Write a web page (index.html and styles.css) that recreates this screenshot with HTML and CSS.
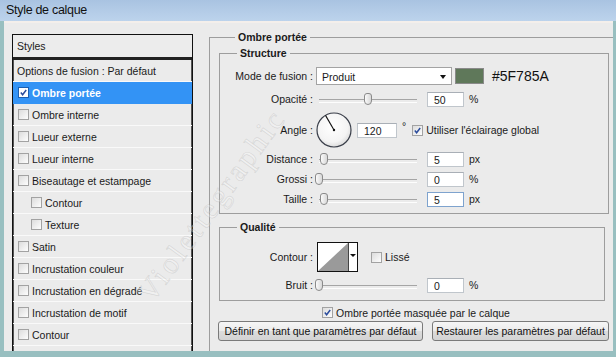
FILE: index.html
```html
<!DOCTYPE html>
<html lang="fr">
<head>
<meta charset="utf-8">
<title>Style de calque</title>
<link rel="stylesheet" href="styles.css">
</head>
<body>
<div class="window">
  <div class="titlebar">Style de calque</div>
  <div class="body">
    <div class="styles-panel">
      <div class="panel-head">Styles</div>
      <div class="panel-row opt">Options de fusion : Par défaut</div>
      <div class="panel-row sel"><span class="cb on white"><svg viewBox="0 0 11 11"><path d="M2.2 5.6 L4.4 8.2 L8.8 2.4"/></svg></span>Ombre portée</div>
      <div class="panel-row"><span class="cb"></span>Ombre interne</div>
      <div class="panel-row"><span class="cb"></span>Lueur externe</div>
      <div class="panel-row"><span class="cb"></span>Lueur interne</div>
      <div class="panel-row"><span class="cb"></span>Biseautage et estampage</div>
      <div class="panel-row sub"><span class="cb"></span>Contour</div>
      <div class="panel-row sub"><span class="cb"></span>Texture</div>
      <div class="panel-row"><span class="cb"></span>Satin</div>
      <div class="panel-row"><span class="cb"></span>Incrustation couleur</div>
      <div class="panel-row"><span class="cb"></span>Incrustation en dégradé</div>
      <div class="panel-row"><span class="cb"></span>Incrustation de motif</div>
      <div class="panel-row"><span class="cb"></span>Contour</div>
    </div>

    <div class="settings">
      <fieldset class="group outer">
        <legend>Ombre portée</legend>

        <fieldset class="group structure">
          <legend>Structure</legend>
          <div class="row row-mode">
            <span class="label">Mode de fusion :</span>
            <div class="select"><span>Produit</span><span class="arrow"></span></div>
            <span class="swatch"></span>
            <span class="hex">#5F785A</span>
          </div>
          <div class="row row-slider">
            <span class="label">Opacité :</span>
            <div class="slider"><span class="thumb" style="left: 50%"></span></div>
            <span class="field">50</span>
            <span class="unit">%</span>
          </div>
          <div class="row row-angle">
            <span class="label">Angle :</span>
            <svg class="dial" viewBox="0 0 36 36">
              <defs>
                <radialGradient id="dialg" cx="45%" cy="40%" r="60%">
                  <stop offset="0" stop-color="#ffffff"/>
                  <stop offset="0.75" stop-color="#f4f4f4"/>
                  <stop offset="1" stop-color="#dcdcdc"/>
                </radialGradient>
              </defs>
              <circle cx="18" cy="18" r="17" fill="url(#dialg)" stroke="#3a3f4a" stroke-width="1.2"/>
              <line x1="18" y1="18" x2="9.5" y2="3.4" stroke="#111" stroke-width="1.1"/>
              <circle cx="18" cy="18" r="1.2" fill="#111"/>
            </svg>
            <span class="field wide">120</span>
            <span class="deg">°</span>
            <span class="cb on"><svg viewBox="0 0 11 11"><path d="M2.2 5.6 L4.4 8.2 L8.8 2.4"/></svg></span>
            <span class="cb-label">Utiliser l'éclairage global</span>
          </div>
          <div class="row row-slider first">
            <span class="label">Distance :</span>
            <div class="slider"><span class="thumb" style="left: 5%"></span></div>
            <span class="field">5</span>
            <span class="unit">px</span>
          </div>
          <div class="row row-slider">
            <span class="label">Grossi :</span>
            <div class="slider"><span class="thumb" style="left: 0%"></span></div>
            <span class="field">0</span>
            <span class="unit">%</span>
          </div>
          <div class="row row-slider">
            <span class="label">Taille :</span>
            <div class="slider"><span class="thumb" style="left: 5%"></span></div>
            <span class="field focus">5</span>
            <span class="unit">px</span>
          </div>
        </fieldset>

        <fieldset class="group quality">
          <legend>Qualité</legend>
          <div class="row row-contour">
            <span class="label">Contour :</span>
            <div class="contour">
              <svg class="curve" viewBox="0 0 30 28" preserveAspectRatio="none"><polygon points="0,28 30,0 30,28" fill="#9a9a9a"/></svg>
              <span class="contour-drop"><span class="arrow small"></span></span>
            </div>
            <span class="cb lisse"></span>
            <span class="cb-label">Lissé</span>
          </div>
          <div class="row row-slider">
            <span class="label">Bruit :</span>
            <div class="slider"><span class="thumb" style="left: 0%"></span></div>
            <span class="field">0</span>
            <span class="unit">%</span>
          </div>
        </fieldset>

        <div class="mask-row">
          <span class="cb on"><svg viewBox="0 0 11 11"><path d="M2.2 5.6 L4.4 8.2 L8.8 2.4"/></svg></span>
          <span class="cb-label">Ombre portée masquée par le calque</span>
        </div>

        <div class="buttons">
          <button class="btn btn-left" type="button">Définir en tant que paramètres par défaut</button>
          <button class="btn btn-right" type="button">Restaurer les paramètres par défaut</button>
        </div>
      </fieldset>
    </div>

    <div class="watermark">Violettegraphic</div>
  </div>
</div>
</body>
</html>
```

FILE: styles.css
```css
* { box-sizing: border-box; }

html, body {
  margin: 0;
  padding: 0;
  background: #98bfc0;
}

.window {
  width: 616px;
  height: 357px;
  display: flex;
  flex-direction: column;
  background: #98bfc0;
  font-family: "Liberation Sans", Arial, sans-serif;
  font-size: 10.5px;
  color: #1a1a1a;
  overflow: hidden;
}

.titlebar {
  height: 21px;
  flex: none;
  padding-left: 6px;
  line-height: 21px;
  font-size: 12.5px;
  letter-spacing: -0.3px;
  color: #111;
  background: linear-gradient(to bottom, #a9c3e1 0%, #b5cde8 60%, #bcd3ec 100%);
}

.body {
  position: relative;
  flex: 1;
  display: flex;
  align-items: flex-start;
  margin: 0 3px 6px 4px;
  background: #ebebeb;
  border-top: 2px solid #f4efeb;
  overflow: hidden;
}

/* ---------- Styles list ---------- */
.styles-panel {
  flex: none;
  width: 181px;
  height: 340px;
  margin: 11px 0 0 8px;
  border: 1px solid #111;
  box-shadow: inset 1px 0 0 #555, inset -1px 0 0 #555;
  background: #ebebeb;
}

.panel-head {
  height: 23px;
  line-height: 22px;
  padding-left: 4px;
  border-bottom: 1px solid #222;
  box-shadow: 0 2px 0 #222;
  margin-bottom: 3px;
  background: #ececec;
}

.panel-row {
  display: flex;
  align-items: center;
  height: 22px;
  padding-left: 5px;
  border-bottom: 1px solid #f9f9f9;
  white-space: nowrap;
}

.panel-row.opt {
  height: 21px;
  padding-left: 4px;
}

.panel-row.sub { padding-left: 18px; }

.panel-row .cb { margin-right: 3px; }

.panel-row.sel {
  background: #3393f5;
  color: #fff;
  font-weight: bold;
  border-bottom-color: #3393f5;
}

/* ---------- Checkboxes ---------- */
.cb {
  flex: none;
  display: inline-block;
  width: 11px;
  height: 11px;
  border: 1px solid #a2a2a2;
  background: linear-gradient(135deg, #dcdcdc 0%, #f0f0f0 60%, #fdfdfd 100%);
}

.cb svg {
  display: block;
  width: 9px;
  height: 9px;
}

.cb svg path {
  fill: none;
  stroke: #2b4c9c;
  stroke-width: 1.8;
}

.cb.white {
  background: #fff;
  border-color: #1d5fb0;
}

.cb-label {
  margin-left: 3px;
  white-space: nowrap;
}

/* ---------- Group boxes ---------- */
.settings {
  flex: none;
  margin-left: 16px;
  margin-top: 8px;
}

.group {
  margin: 0;
  min-inline-size: 0;
  border: 1px solid #9d9d9d;
}

.group > legend {
  font-weight: bold;
  line-height: 13px;
  padding: 0 3px;
}

.outer {
  width: 406px;
  height: 330px;
  padding: 3px 0 0 9px;
  border-right-color: transparent;
}

.outer > legend { margin-left: 16px; }

.structure {
  width: 390px;
  padding: 0 0 6px 0;
}

.structure > legend,
.quality > legend { margin-left: 17px; }

.quality {
  width: 386px;
  margin-top: 7px;
  padding: 0 0 7px 0;
}

/* ---------- Rows ---------- */
.row {
  display: flex;
  align-items: center;
  white-space: nowrap;
}

.label {
  flex: none;
  width: 93px;
  text-align: right;
}

.row-mode {
  height: 18px;
  margin-top: 7px;
}

.row-slider {
  height: 16px;
  margin-top: 6px;
}

.row-slider.first { margin-top: 3px; }

.structure .row-slider + .row-slider { margin-top: 4px; }

.row-angle {
  height: 36px;
  margin-top: 5px;
}

.row-contour {
  height: 30px;
  margin-top: 8px;
}

.quality .row-slider { margin-top: 5px; }

/* select */
.select {
  flex: none;
  display: flex;
  align-items: center;
  justify-content: space-between;
  width: 136px;
  height: 18px;
  margin-left: 3px;
  padding: 1px 5px 0 5px;
  background: #fff;
  border: 1px solid #a3a3a3;
}

.arrow {
  width: 0;
  height: 0;
  border-left: 3.5px solid transparent;
  border-right: 3.5px solid transparent;
  border-top: 4px solid #111;
}

.arrow.small {
  border-left-width: 3px;
  border-right-width: 3px;
  border-top-width: 3px;
}

.swatch {
  flex: none;
  width: 29px;
  height: 16px;
  margin-left: 3px;
  background: #5f785a;
  border: 1px solid #8a8a8a;
}

.hex {
  margin-left: 8px;
  font-size: 14px;
  color: #111;
}

/* slider */
.slider {
  position: relative;
  flex: none;
  width: 98px;
  height: 16px;
  margin-left: 6px;
  margin-right: 10px;
}

.slider::before {
  content: "";
  position: absolute;
  left: 0;
  right: 0;
  top: 8px;
  height: 2px;
  border-top: 1px solid #a5a5a5;
  border-bottom: 1px solid #fdfdfd;
}

.thumb {
  position: absolute;
  top: 2px;
  width: 8px;
  height: 12px;
  margin-left: -4px;
  border: 1px solid #8a8a8a;
  border-radius: 3px 3px 4px 4px;
  background: linear-gradient(to right, #fafafa, #d8d8d8);
}

.field {
  flex: none;
  width: 37px;
  height: 15px;
  padding-left: 6px;
  line-height: 14px;
  background: #fff;
  border: 1px solid #c0c6cc;
  border-top-color: #a9afb6;
}

.field.wide { width: 40px; margin-left: 5px; }

.field.focus { border-color: #7ea3ce; }

.unit { margin-left: 5px; }

.dial {
  flex: none;
  width: 36px;
  height: 36px;
  margin-left: 3px;
}

.deg {
  margin-left: 5px;
  margin-right: 6px;
  align-self: flex-start;
  margin-top: 8px;
}

/* contour picker */
.contour {
  flex: none;
  display: flex;
  width: 41px;
  height: 30px;
  margin-left: 4px;
  border: 1px solid #111;
  background: #fff;
}

.curve {
  display: block;
  width: 30px;
  height: 28px;
}

.contour-drop {
  flex: 1;
  display: flex;
  justify-content: center;
  padding-top: 11px;
  border-left: 1px solid #444;
}

.cb.lisse { margin-left: 13px; }

/* mask + buttons */
.mask-row {
  display: flex;
  align-items: center;
  height: 13px;
  margin-top: 5px;
  padding-left: 103px;
}

.buttons {
  display: flex;
  gap: 9px;
  margin-top: 2px;
  margin-left: -1px;
}

.btn {
  height: 20px;
  padding: 0;
  font-family: inherit;
  font-size: 10.5px;
  color: #111;
  border: 1px solid #7a7a7a;
  border-radius: 3px;
  background: linear-gradient(to bottom, #f6f6f6 0%, #ebebeb 50%, #dcdcdc 51%, #d3d3d3 100%);
}

.btn-left { width: 205px; }
.btn-right { width: 177px; }

/* watermark */
.watermark {
  position: absolute;
  left: 140px;
  top: 258px;
  transform-origin: 0 50%;
  transform: rotate(-54deg);
  font-family: "Liberation Serif", "Times New Roman", serif;
  font-size: 30px;
  letter-spacing: 3px;
  color: rgba(255, 255, 255, 0.3);
  -webkit-text-stroke: 0.7px rgba(160, 160, 160, 0.3);
  white-space: nowrap;
  pointer-events: none;
}
```
